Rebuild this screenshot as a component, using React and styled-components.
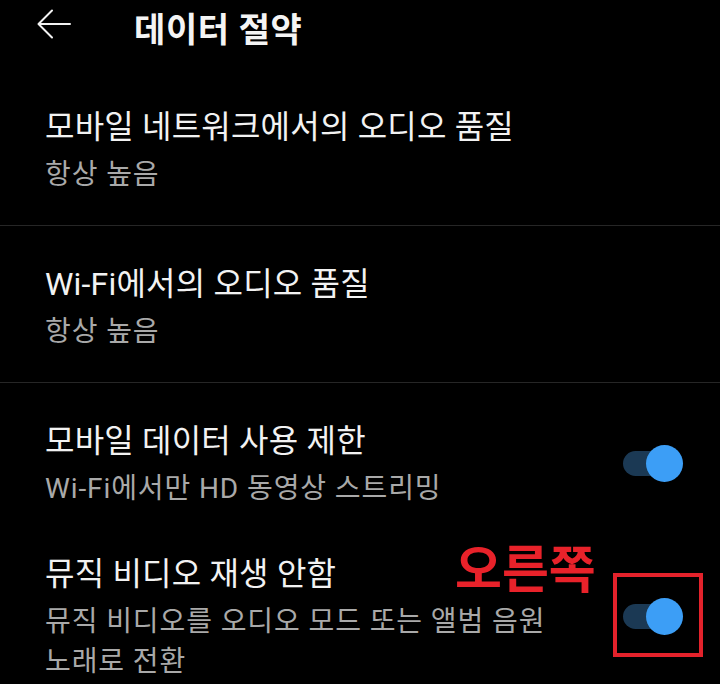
import React from "react";
import styled, { createGlobalStyle } from "styled-components";

const Global = createGlobalStyle`
  html, body { margin: 0; padding: 0; background: #000; }
  body { font-family: Roboto, "Noto Sans CJK KR", sans-serif; }
`;

const Page = styled.div`
  position: relative;
  width: 720px;
  height: 684px;
  overflow: hidden;
  background: #000;
  color: #f2f2f2;
`;

const Header = styled.header`
  display: flex;
  align-items: center;
  height: 54px;
  padding-left: 37px;
  gap: 63px;
`;

const BackIcon = styled.svg`
  width: 34px;
  height: 30px;
  margin-top: -6px;
  flex: none;
`;

const Title = styled.h1`
  margin: 0;
  font-size: 34px;
  font-weight: 700;
  color: #f4f4f4;
  letter-spacing: 0.6px;
`;

const List = styled.div`
  margin-top: 15px;
  display: flex;
  flex-direction: column;
`;

const Item = styled.div`
  display: flex;
  align-items: center;
  padding: 35px 37px ${(p) => (p.$divider ? "30px" : "7px")} 45px;
  border-bottom: ${(p) => (p.$divider ? "1px solid #262626" : "none")};
`;

const Texts = styled.div`
  flex: 1;
  display: flex;
  flex-direction: column;
  gap: 5px;
`;

const ItemTitle = styled.div`
  font-size: 32px;
  line-height: 46px;
  color: #f2f2f2;
  letter-spacing: 0.2px;
`;

const ItemSub = styled.div`
  font-size: 28px;
  line-height: 40px;
  color: #a9a9a9;
  letter-spacing: 0.9px;
`;

const ToggleWrap = styled.div`
  position: relative;
  width: 60px;
  height: 37px;
  flex: none;
`;

const Track = styled.div`
  position: absolute;
  left: 0;
  top: 6px;
  width: 55px;
  height: 25px;
  border-radius: 13px;
  background: #1b3954;
`;

const Thumb = styled.div`
  position: absolute;
  right: 0;
  top: 0;
  width: 37px;
  height: 37px;
  border-radius: 50%;
  background: #3c9ef6;
`;

const Highlight = styled.div`
  position: absolute;
  left: -10px;
  top: -25px;
  width: 82px;
  height: 76px;
  border: 4px solid #e3222b;
`;

const Annotation = styled.div`
  position: absolute;
  left: 455px;
  top: 529px;
  font-size: 51px;
  font-weight: 700;
  color: #e8222a;
`;

function Toggle({ highlighted }) {
  return (
    <ToggleWrap>
      <Track />
      <Thumb />
      {highlighted && <Highlight />}
    </ToggleWrap>
  );
}

const items = [
  { title: "모바일 네트워크에서의 오디오 품질", sub: ["항상 높음"], divider: true },
  { title: "Wi-Fi에서의 오디오 품질", sub: ["항상 높음"], divider: true },
  { title: "모바일 데이터 사용 제한", sub: ["Wi-Fi에서만 HD 동영상 스트리밍"], toggle: true },
  {
    title: "뮤직 비디오 재생 안함",
    sub: ["뮤직 비디오를 오디오 모드 또는 앨범 음원", "노래로 전환"],
    toggle: true,
    highlighted: true,
  },
];

export default function App() {
  return (
    <Page>
      <Global />
      <Header>
        <BackIcon viewBox="0 0 34 30" fill="none" stroke="#f2f2f2" strokeWidth="2" strokeLinecap="round" strokeLinejoin="round">
          <path d="M33 15H2M15 1.5L1.5 15L15 28.5" />
        </BackIcon>
        <Title>데이터 절약</Title>
      </Header>
      <List>
        {items.map((it, i) => (
          <Item key={i} $divider={it.divider}>
            <Texts>
              <ItemTitle>{it.title}</ItemTitle>
              <ItemSub>
                {it.sub.map((s, j) => (
                  <div key={j}>{s}</div>
                ))}
              </ItemSub>
            </Texts>
            {it.toggle && <Toggle highlighted={it.highlighted} />}
          </Item>
        ))}
      </List>
      <Annotation>오른쪽</Annotation>
    </Page>
  );
}
